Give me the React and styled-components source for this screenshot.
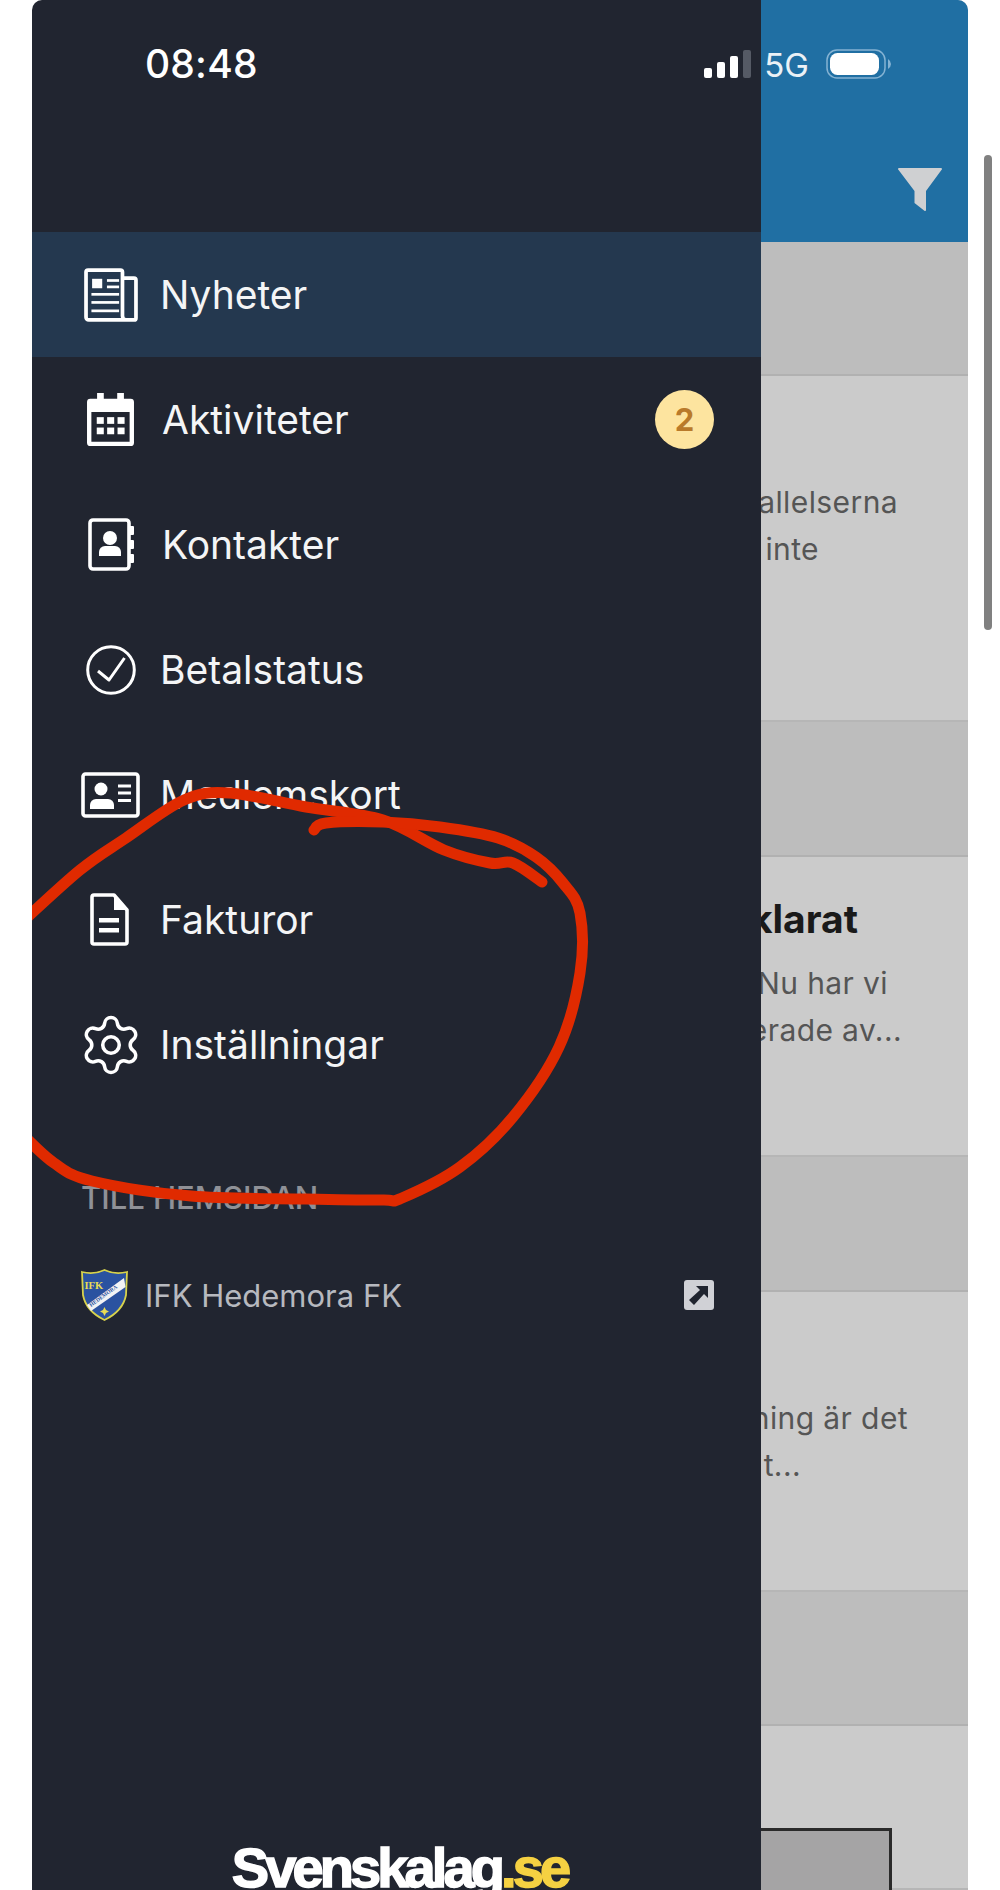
import React from 'react';
import styled, { createGlobalStyle } from 'styled-components';
import { Settings } from 'lucide-react';

const Global = createGlobalStyle`
  html, body { margin: 0; padding: 0; background: #fff; height: 1890px; overflow: hidden; }
  body { font-family: Inter, "Liberation Sans", sans-serif; }
`;
const Page = styled.div`
  width: 1000px; height: 1890px; padding-left: 32px; box-sizing: border-box; position: relative; overflow: hidden;
`;
const Phone = styled.div`
  position: relative; width: 936px; height: 1890px; display: flex; overflow: hidden;
  border-radius: 10px 10px 0 0;
`;
const Drawer = styled.nav`
  width: 729px; flex: none; height: 100%; background: #212530; display: flex; flex-direction: column;
  padding-top: 232px; box-sizing: border-box; overflow: hidden;
`;
const Row = styled.div`
  height: 125px; flex: none; display: flex; align-items: center; padding: 0 47px 0 49px; box-sizing: border-box;
  background: ${p => (p.$active ? '#24384f' : 'transparent')};
`;
const IconSlot = styled.span`
  width: 60px; height: 60px; flex: none; display: flex; align-items: center; justify-content: center;
  color: #fff; margin-right: 19px;
  svg { flex: none; transform: translateX(${p => p.$nudge || 0}px); }
`;
const Label = styled.span`
  font-size: 39px; color: #f4f5f6; font-weight: 400; flex: 1; margin-left: ${p => p.$shift || 0}px; white-space: nowrap;
`;
const Badge = styled.span`
  width: 59px; height: 59px; border-radius: 50%; background: #fde49f; color: #b97a2a; font-weight: 700; font-size: 31px;
  display: flex; align-items: center; justify-content: center;
`;
const SectionTitle = styled.div`
  margin: 77px 0 0 49px; font-size: 31px; line-height: 28px; font-weight: 500; color: #8f9197; white-space: nowrap;
`;
const SiteRow = styled.div`
  display: flex; align-items: center; margin-top: 57px; padding: 0 47px 0 49px;
`;
const SiteName = styled.span`
  flex: 1; margin-left: 17px; font-size: 31px; color: #b7b9bf;
`;
const Brand = styled.div`
  margin-top: auto; height: 50px; flex: none; text-align: center; padding-left: 6px;
  font-family: "Liberation Sans", Arial, sans-serif; font-weight: 700; font-size: 56px; line-height: 56px;
  letter-spacing: -3.9px; color: #fff; -webkit-text-stroke: 1.5px currentColor; white-space: nowrap;
`;
const BrandTld = styled.span` color: #f5d142; `;

const Content = styled.main`
  flex: 1; min-width: 0; display: flex; flex-direction: column; overflow: hidden; background: #cbcbcb;
`;
const Header = styled.header`
  height: 242px; flex: none; background: #206fa3; display: flex; justify-content: flex-end; align-items: flex-start;
  padding: 168px 26px 0 0; box-sizing: border-box;
`;
const Band = styled.div`
  height: ${p => p.$h}px; flex: none; box-sizing: border-box; background: #bdbdbd; border-bottom: 2px solid #b1b1b1;
`;
const Card = styled.article`
  height: ${p => p.$h}px; flex: none; box-sizing: border-box; background: #cbcbcb; padding-top: ${p => p.$top}px;
  border-bottom: 2px solid #b6b6b6;
`;
const Title = styled.h2`
  margin: 0 0 16px; height: 50px; line-height: 50px; font-size: 39px; font-weight: 700; color: #1a1a1a;
  display: flex; justify-content: flex-end; padding-right: ${p => p.$right}px; white-space: nowrap;
`;
const Line = styled.div`
  height: 46.5px; line-height: 46.5px; font-size: 30px; color: #555; letter-spacing: .4px;
  display: flex; justify-content: flex-end; padding-right: ${p => p.$right}px; white-space: nowrap;
`;
const Thumb = styled.div`
  height: 80px; margin-right: 76px; background: #a5a4a5; border: 3px solid #2a2a2a; border-left: 0; box-sizing: border-box;
`;
const StatusBar = styled.div`
  position: absolute; left: 0; right: 0; top: 0; height: 100px; display: flex; align-items: flex-start; color: #fff;
`;
const Clock = styled.span`
  margin: 41px 0 0 113px; font-size: 39px; line-height: 46px; font-weight: 500; letter-spacing: .2px; flex: 1;
`;
const Signal = styled.svg` margin-top: 50px; flex: none; `;
const Net = styled.span`
  margin: 45px 0 0 13px; font-size: 33px; line-height: 40px; color: #eaf1f6;
`;
const Battery = styled.svg` margin: 49px 76px 0 17px; flex: none; `;
const Scrollbar = styled.div`
  position: absolute; left: 984px; top: 155px; width: 8px; height: 475px; border-radius: 4px; background: #808080;
`;
const Scribble = styled.svg`
  position: absolute; left: -32px; top: 0; pointer-events: none;
`;

const Newspaper = () => (
  <svg width="54" height="54" viewBox="0 0 160 160" fill="#fff">
    <path d="M114 30h34a6 6 0 0 1 6 6v112a6 6 0 0 1-6 6H14a8 8 0 0 1-8-8V12a6 6 0 0 1 6-6h96a6 6 0 0 1 6 6v130a12 12 0 0 0 12 12" fill="none" stroke="#fff" strokeWidth="11" />
    <rect x="24" y="32" width="30" height="28" />
    <rect x="68" y="33" width="36" height="8" /><rect x="68" y="52" width="36" height="8" />
    <rect x="22" y="74" width="82" height="8" /><rect x="22" y="98" width="82" height="8" /><rect x="22" y="123" width="82" height="8" />
  </svg>
);
const Calendar = () => (
  <svg width="47" height="53" viewBox="0 0 140 158" fill="#fff">
    <path fillRule="evenodd" d="M30 0h20v17h40V0h20v17h20a10 10 0 0 1 10 10v121a10 10 0 0 1-10 10H10a10 10 0 0 1-10-10V27a10 10 0 0 1 10-10h20zM13 57v88h114V57z" />
    <rect x="29" y="72" width="21" height="20" /><rect x="60" y="72" width="21" height="20" /><rect x="91" y="72" width="21" height="20" />
    <rect x="29" y="103" width="21" height="20" /><rect x="60" y="103" width="21" height="20" /><rect x="91" y="103" width="21" height="20" />
  </svg>
);
const Contact = () => (
  <svg width="47" height="53" viewBox="0 0 47 53" fill="#fff">
    <rect x="2" y="2" width="39" height="49" rx="3" fill="none" stroke="#fff" strokeWidth="3.6" />
    <circle cx="22" cy="20" r="7" />
    <path d="M11 38v-4a6 6 0 0 1 6-6h10a6 6 0 0 1 6 6v4z" />
    <rect x="41" y="8" width="5" height="9" rx="1" /><rect x="41" y="22" width="5" height="9" rx="1" /><rect x="41" y="36" width="5" height="9" rx="1" />
  </svg>
);
const Check = () => (
  <svg width="50" height="50" viewBox="0 0 50 50" fill="none" stroke="#fff">
    <circle cx="25" cy="25" r="23.3" strokeWidth="3" />
    <path d="M12 26l11 9 15.5-22" strokeWidth="3" strokeLinejoin="round" />
  </svg>
);
const IdCard = () => (
  <svg width="59" height="46" viewBox="0 0 59 46" fill="#fff">
    <rect x="2" y="2" width="55" height="42" rx="2.5" fill="none" stroke="#fff" strokeWidth="3.6" />
    <circle cx="20" cy="17" r="6.5" />
    <path d="M9 37v-4a6 6 0 0 1 6-6h12a6 6 0 0 1 6 6v4z" />
    <rect x="37" y="12.5" width="13" height="3" /><rect x="37" y="19.5" width="13" height="3" /><rect x="37" y="27" width="13" height="3" />
  </svg>
);
const Doc = () => (
  <svg width="39" height="53" viewBox="0 0 39 53" fill="#fff">
    <path d="M4 2h20l13 15v32a2 2 0 0 1-2 2H4a2 2 0 0 1-2-2V4a2 2 0 0 1 2-2z" fill="none" stroke="#fff" strokeWidth="3.6" strokeLinejoin="round" />
    <path d="M24 2v15h13z" />
    <rect x="9" y="25" width="20" height="4.5" /><rect x="9" y="35" width="20" height="4.5" />
  </svg>
);
const Funnel = () => (
  <svg width="44" height="43" viewBox="0 0 44 43" fill="#cfd0d2">
    <path d="M1 0h42a1 1 0 0 1 .8 1.6L28 23v19a1 1 0 0 1-1.6.8L16.5 35V23L.2 1.600A1 1 0 0 1 1 0z" />
  </svg>
);
const External = () => (
  <svg width="30" height="30" viewBox="0 0 30 30">
    <rect width="30" height="30" rx="3" fill="#d0d1d6" />
    <path d="M12 6h12v12l-4-4-10 11-5-5 11-10z" fill="#20242f" />
  </svg>
);
const Crest = () => (
  <svg width="47" height="52" viewBox="0 0 47 52">
    <path d="M1 3Q13 6 23.5 1 34 6 46 3L45 26Q42 42 23.5 51 5 42 2 26z" fill="#2a52a0" stroke="#d7d24c" strokeWidth="1.8" />
    <path d="M6 36L43 9l1.5 9L10 42z" fill="#f2f3f5" />
    <text x="3.5" y="20" fontFamily="Liberation Serif, serif" fontWeight="700" fontSize="10.5" fill="#e7dc55">IFK</text>
    <text x="10" y="38" transform="rotate(-36 10 38)" fontFamily="Liberation Serif, serif" fontWeight="700" fontSize="5.5" fill="#2a52a0">HEDEMORA</text>
    <path d="M23.5 38l1.500 3 3 1.500-3 1.500-1.500 3-1.500-3-3-1.500 3-1.500z" fill="#e7dc55" />
  </svg>
);

const smooth = pts => {
  let d = `M${pts[0][0]} ${pts[0][1]}`;
  for (let i = 0; i < pts.length - 1; i++) {
    const p0 = pts[i - 1] || pts[i], p1 = pts[i], p2 = pts[i + 1], p3 = pts[i + 2] || p2;
    d += `C${p1[0] + (p2[0] - p0[0]) / 6} ${p1[1] + (p2[1] - p0[1]) / 6} ${p2[0] - (p3[0] - p1[0]) / 6} ${p2[1] - (p3[1] - p1[1]) / 6} ${p2[0]} ${p2[1]}`;
  }
  return d;
};
const outer = [[20, 924], [80, 870], [126, 838], [184, 800], [230, 793], [306, 807], [383, 820], [444, 850], [490, 863], [513, 863], [542, 882]];
const second = [[314, 830], [326, 823], [383, 822], [440, 827], [498, 838], [536, 857], [563, 883], [580, 913], [580, 973], [559, 1047], [513, 1117], [460, 1167], [402, 1198], [383, 1200], [306, 1199], [191, 1196], [92, 1181], [54, 1163], [20, 1132]];

const nav = [
  ['Nyheter', <Newspaper />, 0, 0, true],
  ['Aktiviteter', <Calendar />, 2, -1],
  ['Kontakter', <Contact />, 2, 0],
  ['Betalstatus', <Check />, 0, 0],
  ['Medlemskort', <IdCard />, 0, -1],
  ['Fakturor', <Doc />, 0, -2],
  ['Inställningar', <Settings size={66} strokeWidth={1.3} />, 0, 0],
];

export default function App() {
  return (
    <Page>
      <Global />
      <Phone>
        <Drawer>
          {nav.map(([name, icon, shift, nudge, active]) => (
            <Row key={name} $active={active}>
              <IconSlot $nudge={nudge}>{icon}</IconSlot>
              <Label $shift={shift}>{name}</Label>
              {name === 'Aktiviteter' && <Badge>2</Badge>}
            </Row>
          ))}
          <SectionTitle>TILL HEMSIDAN</SectionTitle>
          <SiteRow>
            <Crest />
            <SiteName>IFK Hedemora FK</SiteName>
            <External />
          </SiteRow>
          <Brand>Svenskalag<BrandTld>.se</BrandTld></Brand>
        </Drawer>
        <Content>
          <Header><Funnel /></Header>
          <Band $h={134} />
          <Card $h={346} $top={103}>
            <Line $right={70}>kallelserna</Line>
            <Line $right={149}>inte</Line>
          </Card>
          <Band $h={135} />
          <Card $h={300} $top={37}>
            <Title $right={110}>klarat</Title>
            <Line $right={80}>Nu har vi</Line>
            <Line $right={66}>erade av...</Line>
          </Card>
          <Band $h={135} />
          <Card $h={300} $top={103}>
            <Line $right={60}>ning är det</Line>
            <Line $right={167}>t...</Line>
          </Card>
          <Band $h={134} />
          <Card $h={164} $top={102}><Thumb /></Card>
        </Content>
        <StatusBar>
          <Clock>08:48</Clock>
          <Signal width="47" height="28" viewBox="0 0 47 28">
            <rect x="0" y="18" width="8" height="10" rx="2" fill="#fff" />
            <rect x="13" y="12" width="8" height="16" rx="2" fill="#fff" />
            <rect x="26" y="6" width="8" height="22" rx="2" fill="#fff" />
            <rect x="39" y="0" width="8" height="28" rx="2" fill="#555a65" />
          </Signal>
          <Net>5G</Net>
          <Battery width="66" height="30" viewBox="0 0 66 30">
            <rect x="1" y="1" width="58" height="28" rx="10" fill="none" stroke="#85b3d3" strokeWidth="1.5" />
            <rect x="4" y="4" width="49" height="22" rx="7.5" fill="#fff" />
            <path d="M62 10q3 2 3 5t-3 5z" fill="#85b3d3" />
          </Battery>
        </StatusBar>
        <Scribble width="1000" height="1890" viewBox="0 0 1000 1890" fill="none" stroke="#e02a00" strokeWidth="11" strokeLinecap="round" strokeLinejoin="round">
          <path d={smooth(outer)} />
          <path d={smooth(second)} />
        </Scribble>
      </Phone>
      <Scrollbar />
    </Page>
  );
}
